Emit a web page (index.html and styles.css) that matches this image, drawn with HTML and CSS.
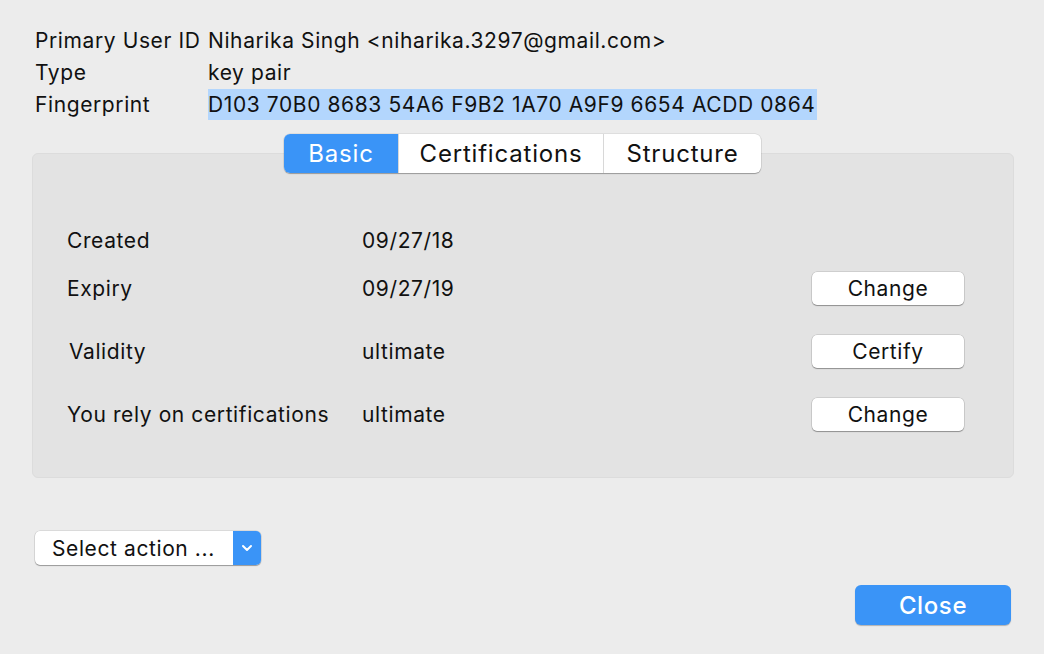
FILE: index.html
```html
<!DOCTYPE html>
<html>
<head>
<meta charset="utf-8">
<link rel="stylesheet" href="styles.css">
</head>
<body>
<div class="window">
  <div class="info">
    <div class="label">Primary User ID</div>
    <div class="value">Niharika Singh &lt;niharika.3297@gmail.com&gt;</div>
    <div class="label">Type</div>
    <div class="value">key pair</div>
    <div class="label">Fingerprint</div>
    <div class="value"><span class="sel">D103 70B0 8683 54A6 F9B2 1A70 A9F9 6654 ACDD 0864</span></div>
  </div>

  <div class="tabs-area">
    <div class="tabs">
      <div class="tab active">Basic</div>
      <div class="tab">Certifications</div>
      <div class="tab">Structure</div>
    </div>
    <div class="panel">
      <div class="row r1">
        <div class="plabel">Created</div>
        <div class="pvalue">09/27/18</div>
      </div>
      <div class="row r2">
        <div class="plabel">Expiry</div>
        <div class="pvalue">09/27/19</div>
        <button class="btn">Change</button>
      </div>
      <div class="row r3">
        <div class="plabel indent">Validity</div>
        <div class="pvalue">ultimate</div>
        <button class="btn">Certify</button>
      </div>
      <div class="row r4">
        <div class="plabel">You rely on certifications</div>
        <div class="pvalue">ultimate</div>
        <button class="btn">Change</button>
      </div>
    </div>
  </div>

  <div class="select">
    <span class="select-text">Select action ...</span>
    <span class="select-arrow"><svg width="14" height="10" viewBox="0 0 14 10"><path d="M3 3 L7 7 L11 3" fill="none" stroke="#fff" stroke-width="2" stroke-linecap="round" stroke-linejoin="round"/></svg></span>
  </div>

  <div class="footer">
    <button class="close">Close</button>
  </div>
</div>
</body>
</html>
```
FILE: styles.css
```css
html, body {
  margin: 0;
  padding: 0;
  background: #ececec;
  width: 1044px;
  height: 654px;
  overflow: hidden;
}
body {
  font-family: Inter, "Liberation Sans", Arial, sans-serif;
  color: #111;
  letter-spacing: 0.6px;
}
.window {
  padding: 24px 30px 0 32px;
}
.info {
  display: grid;
  grid-template-columns: 173px auto;
  grid-auto-rows: 32px;
  align-items: center;
  font-size: 21px;
  margin-left: 3px;
}
.info .value {
  white-space: nowrap;
}
.sel {
  background: #b3d6fd;
  padding: 3px 2px 3px 0;
}
.tabs-area {
  position: relative;
  margin-top: 14px;
  padding-top: 19px;
}
.tabs {
  position: absolute;
  left: 252px;
  top: 0;
  display: flex;
  height: 39px;
  border-radius: 6px;
  background: #fff;
  box-shadow: 0 1px 1px rgba(0,0,0,0.28), 0 0 0 0.5px rgba(0,0,0,0.12);
  overflow: hidden;
  z-index: 2;
}
.tab {
  display: flex;
  align-items: center;
  justify-content: center;
  font-size: 24px;
  letter-spacing: 0.8px;
  color: #111;
  border-left: 1px solid #d8d8d8;
}
.tab:nth-child(1) { width: 114px; border-left: none; }
.tab:nth-child(2) { width: 204px; }
.tab:nth-child(3) { width: 157px; }
.tab.active {
  background: #3a94f7;
  color: #fff;
}
.panel {
  width: 982px;
  height: 325px;
  box-sizing: border-box;
  background: #e3e3e3;
  border-radius: 6px;
  border: 1px solid #dcdcdc;
  padding: 70px 0 0 34px;
}
.row {
  display: flex;
  align-items: center;
  font-size: 21px;
  height: 33px;
}
.r2 { margin-top: 15px; }
.r3 { margin-top: 30px; }
.r4 { margin-top: 30px; }
.plabel {
  width: 295px;
  white-space: nowrap;
}
.plabel.indent { padding-left: 2px; width: 293px; }
.pvalue {
  width: 450px;
}
.btn {
  width: 152px;
  height: 33px;
  background: #fff;
  border: none;
  border-radius: 5px;
  box-shadow: 0 1px 1px rgba(0,0,0,0.3), 0 0 0 0.5px rgba(0,0,0,0.18);
  font-family: Inter, "Liberation Sans", Arial, sans-serif;
  font-size: 21px;
  letter-spacing: 0.6px;
  color: #111;
  padding: 0;
}
.select {
  margin-top: 53px;
  margin-left: 3px;
  display: flex;
  width: 226px;
  height: 34px;
  border-radius: 5px;
  background: #fff;
  box-shadow: 0 1px 1px rgba(0,0,0,0.3), 0 0 0 0.5px rgba(0,0,0,0.15);
  overflow: hidden;
}
.select-text {
  flex: 1;
  display: flex;
  align-items: center;
  padding-left: 17px;
  font-size: 21px;
  white-space: nowrap;
}
.select-arrow {
  width: 28px;
  background: #3a94f7;
  display: flex;
  align-items: center;
  justify-content: center;
}
.footer {
  display: flex;
  justify-content: flex-end;
  margin-top: 20px;
  padding-right: 3px;
}
.close {
  width: 156px;
  height: 40px;
  border: none;
  border-radius: 6px;
  background: #3a94f7;
  color: #fff;
  font-family: Inter, "Liberation Sans", Arial, sans-serif;
  font-size: 24px;
  font-weight: 500;
  letter-spacing: 0.6px;
  box-shadow: 0 1px 1px rgba(0,0,0,0.25);
  padding: 0;
}
```
